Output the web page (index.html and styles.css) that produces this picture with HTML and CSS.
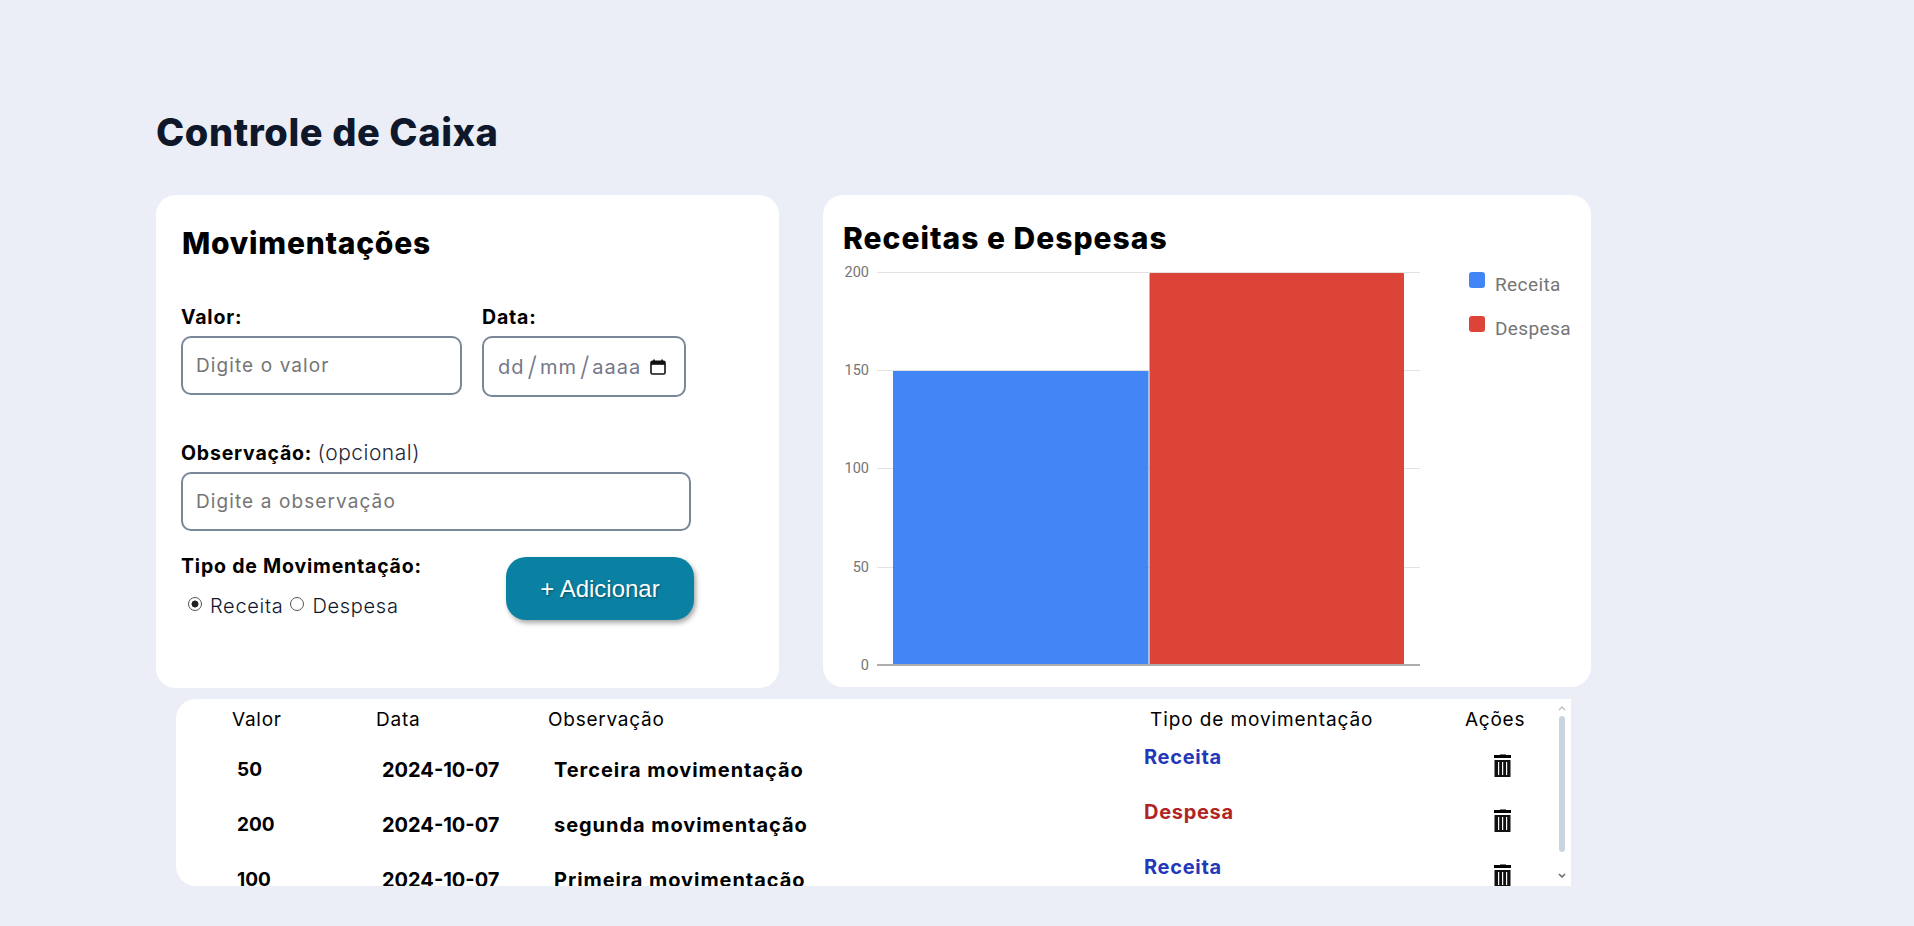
FILE: index.html
```html
<!DOCTYPE html>
<html lang="pt-BR">
<head>
  <meta charset="UTF-8" />
  <meta name="viewport" content="width=device-width, initial-scale=1.0" />
  <title>Controle de Caixa</title>
  <link rel="stylesheet" href="styles.css">
</head>
<body>
  <svg class="defs" width="0" height="0">
    <symbol id="lixeira" viewBox="0 0 17 23">
      <rect x="6" y="0" width="6" height="1.5" fill="#777" />
      <rect x="0" y="1" width="17" height="3" fill="#000" />
      <rect x="0.5" y="6" width="16" height="17" fill="#111" />
      <rect x="4" y="8" width="1.2" height="13" fill="#fff" />
      <rect x="8" y="8" width="1.2" height="13" fill="#fff" />
      <rect x="12" y="8" width="1.2" height="13" fill="#fff" />
    </symbol>
  </svg>

  <main class="pagina">
    <h1>Controle de Caixa</h1>

    <div class="painel">
      <section class="card form-card">
        <h2>Movimentações</h2>
        <div class="linha-campos">
          <div class="campo">
            <label class="rotulo" for="valor">Valor:</label>
            <input class="entrada entrada-valor" id="valor" type="text" placeholder="Digite o valor" />
          </div>
          <div class="campo">
            <label class="rotulo">Data:</label>
            <div class="entrada entrada-data">
              <span>dd</span><span class="barra">/</span><span>mm</span><span class="barra">/</span><span>aaaa</span>
              <svg class="calendario" viewBox="0 0 16 16" width="16" height="16">
                <path d="M4 0.5v2M12 0.5v2" stroke="#111" stroke-width="1.6" />
                <rect x="1" y="2.2" width="14" height="12.8" rx="1.5" fill="none" stroke="#111" stroke-width="1.6" />
                <rect x="1" y="2.2" width="14" height="3.6" fill="#111" />
              </svg>
            </div>
          </div>
        </div>

        <label class="rotulo rotulo-obs" for="obs">Observação: <span class="opcional">(opcional)</span></label>
        <input class="entrada entrada-obs" id="obs" type="text" placeholder="Digite a observação" />

        <div class="linha-tipo">
          <div class="tipo">
            <span class="rotulo">Tipo de Movimentação:</span>
            <div class="radios">
              <input type="radio" name="tipo" id="receita" checked />
              <label for="receita">Receita</label>
              <input type="radio" name="tipo" id="despesa" />
              <label for="despesa">Despesa</label>
            </div>
          </div>
          <button class="adicionar">+ Adicionar</button>
        </div>
      </section>

      <section class="card chart-card">
        <h2>Receitas e Despesas</h2>
        <svg class="grafico" width="768" height="429" viewBox="0 0 768 429">
          <g stroke="#e2e2e2" stroke-width="1">
            <line x1="54" x2="597" y1="14.5" y2="14.5" />
            <line x1="54" x2="597" y1="112.5" y2="112.5" />
            <line x1="54" x2="597" y1="210.5" y2="210.5" />
            <line x1="54" x2="597" y1="309.5" y2="309.5" />
          </g>
          <rect x="70" y="113" width="255.5" height="294" fill="#4285f4" />
          <rect x="326.5" y="15" width="254.5" height="392" rx="1" fill="#db4437" />
          <line x1="54" x2="597" y1="407" y2="407" stroke="#adadad" stroke-width="2" />
          <g class="eixo" text-anchor="end">
            <text x="46" y="19">200</text>
            <text x="46" y="117">150</text>
            <text x="46" y="215">100</text>
            <text x="46" y="314">50</text>
            <text x="46" y="412">0</text>
          </g>
          <rect x="646" y="14" width="16" height="16" rx="3" fill="#4285f4" />
          <rect x="646" y="58" width="16" height="16" rx="3" fill="#db4437" />
          <text class="legenda" x="672" y="33">Receita</text>
          <text class="legenda" x="672" y="77">Despesa</text>
        </svg>
      </section>
    </div>

    <section class="lista">
      <table>
        <thead>
          <tr>
            <th class="col-valor">Valor</th>
            <th class="col-data">Data</th>
            <th class="col-obs">Observação</th>
            <th class="col-tipo">Tipo de movimentação</th>
            <th class="col-acoes">Ações</th>
          </tr>
        </thead>
        <tbody>
          <tr>
            <td class="col-valor">50</td>
            <td class="col-data">2024-10-07</td>
            <td class="col-obs">Terceira movimentação</td>
            <td class="col-tipo receita">Receita</td>
            <td class="col-acoes"><svg width="17" height="23"><use href="#lixeira" /></svg></td>
          </tr>
          <tr>
            <td class="col-valor">200</td>
            <td class="col-data">2024-10-07</td>
            <td class="col-obs">segunda movimentação</td>
            <td class="col-tipo despesa">Despesa</td>
            <td class="col-acoes"><svg width="17" height="23"><use href="#lixeira" /></svg></td>
          </tr>
          <tr>
            <td class="col-valor">100</td>
            <td class="col-data">2024-10-07</td>
            <td class="col-obs">Primeira movimentação</td>
            <td class="col-tipo receita">Receita</td>
            <td class="col-acoes"><svg width="17" height="23"><use href="#lixeira" /></svg></td>
          </tr>
        </tbody>
      </table>
      <div class="rolagem">
        <svg class="seta" width="8" height="5" viewBox="0 0 8 5"><path d="M1 4l3-3 3 3" fill="none" stroke="#c4c4c4" stroke-width="1.5" /></svg>
        <div class="polegar"></div>
        <svg class="seta seta-baixo" width="8" height="5" viewBox="0 0 8 5"><path d="M1 1l3 3 3-3" fill="none" stroke="#666" stroke-width="1.5" /></svg>
      </div>
    </section>
  </main>
</body>
</html>
```

FILE: styles.css
```css
* { box-sizing: border-box; }
body { margin: 0; background: #ebeef6; font-family: Inter, "Open Sans", sans-serif; color: #000; height: 926px; overflow: hidden; }
.defs { position: absolute; }
.pagina { padding: 110px 0 0 156px; }

h1 { margin: 0 0 41px 0; font-size: 38px; line-height: 44px; font-weight: 800; color: #0f172a; letter-spacing: 0.6px; }
h2 { margin: 0; font-size: 30px; line-height: 40px; font-weight: 800; letter-spacing: 0.75px; }

.painel { display: flex; gap: 44px; align-items: flex-start; }
.card { background: #fff; border-radius: 20px; }
.form-card { width: 623px; height: 493px; padding: 28px 26px 0 25px; }
.form-card h2 { margin-left: 1px; }
.chart-card { width: 768px; height: 492px; padding-top: 23px; }
.chart-card h2 { margin-left: 20px; letter-spacing: 1px; }
.grafico { display: block; }
.eixo text { font-family: Roboto, sans-serif; font-size: 14.5px; fill: #757575; }
.legenda { font-family: Roboto, sans-serif; font-size: 19px; letter-spacing: 0.4px; fill: #757575; }

.linha-campos { display: flex; gap: 20px; margin-top: 42px; align-items: flex-start; }
.campo { display: flex; flex-direction: column; gap: 7px; }
.rotulo { display: block; font-size: 19.5px; line-height: 24px; font-weight: 700; letter-spacing: 0.8px; }
.rotulo-obs { margin-top: 44px; margin-bottom: 7px; }
.opcional { font-weight: 300; font-size: 21px; letter-spacing: 0.5px; color: #1f2937; }

.entrada { border: 2px solid #7a8799; border-radius: 10px; background: #fff; padding: 0 13px; font-family: inherit; font-size: 19px; letter-spacing: 1.1px; color: #000; display: block; outline: none; }
.entrada::placeholder { color: #757575; opacity: 1; }
.entrada-valor { width: 281px; height: 59px; }
.entrada-obs { width: 510px; height: 59px; }
.entrada-data { width: 204px; height: 61px; display: flex; align-items: center; padding: 0 18px 0 14px; color: #75788a; font-size: 20px; letter-spacing: 1px; }
.barra { margin: 0 3px; font-size: 27px; font-weight: 300; letter-spacing: 0; }
.calendario { margin-left: auto; }

.linha-tipo { display: flex; margin-top: 23px; align-items: flex-start; }
.tipo { width: 325px; }
.radios { display: flex; align-items: center; margin-top: 16px; padding-left: 7px; font-size: 20px; letter-spacing: 0.7px; font-weight: 300; color: #0f172a; line-height: 24px; }
.radios input { appearance: none; margin: 0 8px 4px 0; width: 14px; height: 14px; border: 1.5px solid #555; border-radius: 50%; background: #fff; }
.radios input:checked { background: radial-gradient(circle, #222 0 3.2px, #fff 3.8px); }
.radios label { margin-right: 7px; }
.adicionar { margin-top: 3px; width: 188px; height: 63px; border: 0; border-radius: 20px; background: #0a80a3; color: #fff; font-family: "Liberation Sans", Arial, sans-serif; font-size: 24px; box-shadow: 2px 3px 5px rgba(0,0,0,0.35); text-shadow: 1px 1px 2px rgba(0,0,0,0.4); }

.lista { position: relative; margin: 11px 0 0 20px; width: 1395px; height: 187px; background: #fff; border-radius: 20px 0 0 20px; overflow: hidden; }
table { border-collapse: collapse; table-layout: fixed; width: 1395px; }
th { height: 43px; padding: 0 0 2px; text-align: left; font-size: 19px; letter-spacing: 0.75px; font-weight: 400; }
td { height: 55px; padding: 0; font-size: 20px; letter-spacing: 0.95px; font-weight: 700; }
.col-valor { width: 200px; }
.col-data { width: 172px; }
.col-obs { width: 596px; }
.col-tipo { width: 321px; }
td.col-data { letter-spacing: 0; }
td.col-data, td.col-obs { padding-left: 6px; }
th.col-valor { padding-left: 56px; }
td.col-valor { padding-left: 61px; font-size: 19px; letter-spacing: 0; }
th.col-tipo { padding-left: 6px; letter-spacing: 0.9px; }
td.col-tipo { vertical-align: top; padding-top: 3px; letter-spacing: 0.7px; }
.receita { color: #2338b8; }
.despesa { color: #b02424; }
td.col-acoes { padding: 0 0 9px 29px; line-height: 0; }

.rolagem { position: absolute; top: 0; right: 6px; bottom: 0; width: 6px; display: flex; flex-direction: column; align-items: center; }
.seta { flex: none; margin-top: 7px; }
.polegar { margin-top: 5px; width: 6px; height: 136px; border-radius: 3px; background: #cbd5e1; }
.seta-baixo { margin-top: 21px; }
```
